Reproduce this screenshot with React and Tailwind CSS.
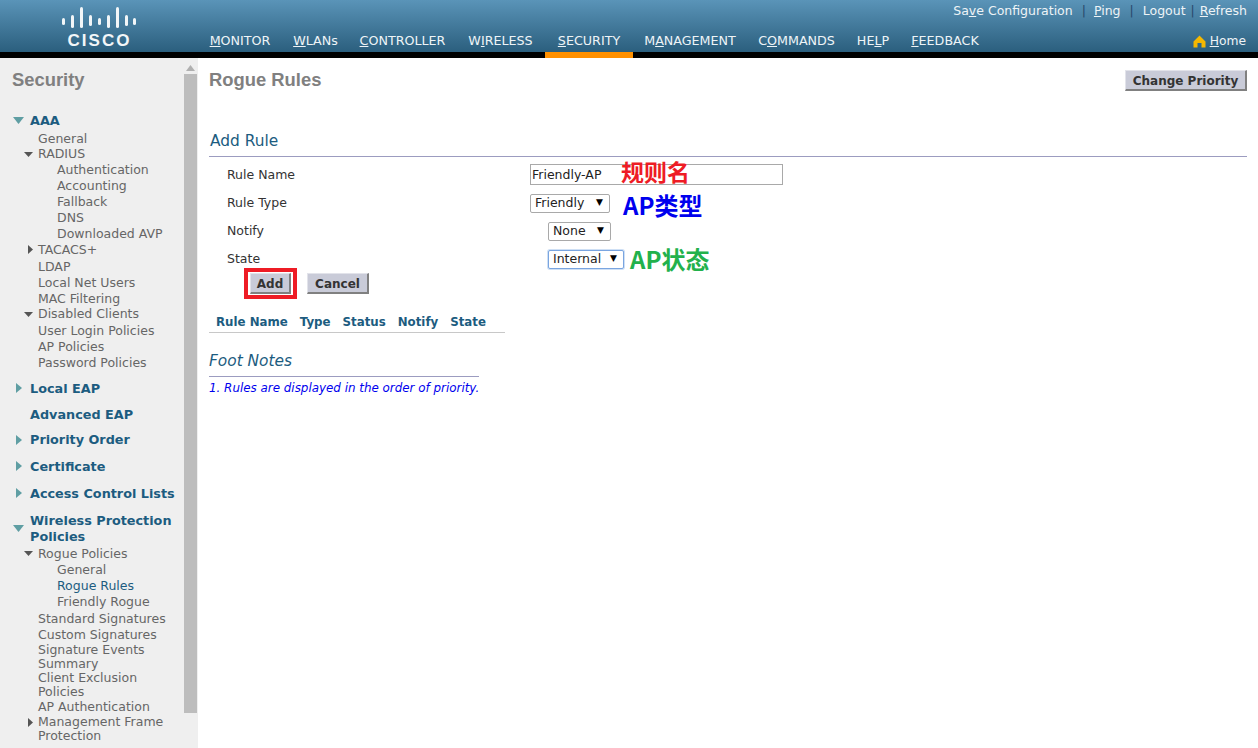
// before, underlined letter, after, column width
const navItems = [
  ['', 'M', 'ONITOR', 'w-[84px]'],
  ['', 'W', 'LANs', 'w-[67px]'],
  ['', 'C', 'ONTROLLER', 'w-[107px]'],
  ['W', 'I', 'RELESS', 'w-[89px]'],
  ['', 'S', 'ECURITY', 'w-[88px]'],
  ['M', 'A', 'NAGEMENT', 'w-[114px]'],
  ['C', 'O', 'MMANDS', 'w-[99px]'],
  ['HE', 'L', 'P', 'w-[54px]'],
  ['', 'F', 'EEDBACK', 'w-[90px]'],
]

// h = row height, so the odd spacing of the original tree stays in the flow
const tree = [
  { t: 'AAA', h: 'h-[20px]', head: true, arrow: 'down' },
  { t: 'General', h: 'h-[16px]', lvl: 1 },
  { t: 'RADIUS', h: 'h-[15px]', lvl: 1, arrow: 'smalldown' },
  { t: 'Authentication', h: 'h-[16px]', lvl: 2 },
  { t: 'Accounting', h: 'h-[16px]', lvl: 2 },
  { t: 'Fallback', h: 'h-[16px]', lvl: 2 },
  { t: 'DNS', h: 'h-[16px]', lvl: 2 },
  { t: 'Downloaded AVP', h: 'h-[16px]', lvl: 2 },
  { t: 'TACACS+', h: 'h-[17px]', lvl: 1, arrow: 'smallright' },
  { t: 'LDAP', h: 'h-[16px]', lvl: 1 },
  { t: 'Local Net Users', h: 'h-[16px]', lvl: 1 },
  { t: 'MAC Filtering', h: 'h-[16px]', lvl: 1 },
  { t: 'Disabled Clients', h: 'h-[15px]', lvl: 1, arrow: 'smalldown', pad: 'mb-[1px]' },
  { t: 'User Login Policies', h: 'h-[16px]', lvl: 1 },
  { t: 'AP Policies', h: 'h-[16px]', lvl: 1 },
  { t: 'Password Policies', h: 'h-[16px]', lvl: 1 },
  { t: 'Local EAP', h: 'h-[27px]', head: true, arrow: 'right', pad: 'mt-[4px]' },
  { t: 'Advanced EAP', h: 'h-[25px]', head: true },
  { t: 'Priority Order', h: 'h-[26px]', head: true, arrow: 'right' },
  { t: 'Certificate', h: 'h-[27px]', head: true, arrow: 'right' },
  { t: 'Access Control Lists', h: 'h-[27px]', head: true, arrow: 'right' },
  { t: 'Wireless Protection', h: 'h-[16px]', head: true, arrow: 'between', pad: 'mt-[6px]' },
  { t: 'Policies', h: 'h-[16px]', head: true, pad: 'mb-[1px]' },
  { t: 'Rogue Policies', h: 'h-[16px]', lvl: 1, arrow: 'smalldown' },
  { t: 'General', h: 'h-[16px]', lvl: 2 },
  { t: 'Rogue Rules', h: 'h-[16px]', lvl: 2, active: true },
  { t: 'Friendly Rogue', h: 'h-[17px]', lvl: 2 },
  { t: 'Standard Signatures', h: 'h-[16px]', lvl: 1 },
  { t: 'Custom Signatures', h: 'h-[16px]', lvl: 1 },
  { t: 'Signature Events', h: 'h-[14px]', lvl: 1 },
  { t: 'Summary', h: 'h-[14px]', lvl: 1 },
  { t: 'Client Exclusion', h: 'h-[14px]', lvl: 1 },
  { t: 'Policies', h: 'h-[14px]', lvl: 1 },
  { t: 'AP Authentication', h: 'h-[16px]', lvl: 1 },
  { t: 'Management Frame', h: 'h-[14px]', lvl: 1, arrow: 'smallright' },
  { t: 'Protection', h: 'h-[15px]', lvl: 1 },
]

const logoBars = [
  [0, 18, 7], [9, 15, 13], [18, 7, 21], [27, 15, 11], [36, 18, 7],
  [45, 15, 13], [54, 7, 21], [63, 15, 11], [71, 18, 7],
]

const Logo = () => (
  <div className="w-[198px] shrink-0 flex flex-col items-center pt-[7px]">
    <svg width="74" height="22" viewBox="0 7 74 22" className="text-[#f2f6f8]">
      {logoBars.map(([x, y, h]) => (
        <rect key={x} x={x} y={y} width="3" height={h} rx="1.5" fill="currentColor" />
      ))}
    </svg>
    <div className='font-["Liberation_Sans",sans-serif] font-bold text-[17px] leading-[18px] tracking-[2px] text-[#f2f6f8] mt-[3px] ml-[1px]'>CISCO</div>
  </div>
)

const Arrow = ({ kind }) => {
  if (!kind) return null
  if (kind === 'down')
    return <svg width="11" height="7" viewBox="0 0 11 7" className="absolute left-[13px] top-[6px]"><path d="M0 0H11L5.5 7Z" fill="#5f9ea3" /></svg>
  if (kind === 'between')
    return <svg width="11" height="7" viewBox="0 0 11 7" className="absolute left-[13px] top-[12px]"><path d="M0 0H11L5.5 7Z" fill="#5f9ea3" /></svg>
  if (kind === 'right')
    return <svg width="6" height="10" viewBox="0 0 6 10" className="absolute left-[16px] top-[8px]"><path d="M0 0L6 5L0 10Z" fill="#5f9ea3" /></svg>
  if (kind === 'smalldown')
    return <svg width="9" height="5" viewBox="0 0 9 5" className="absolute left-[24px] top-[5px]"><path d="M0 0H9L4.5 5Z" fill="#555" /></svg>
  return <svg width="5" height="9" viewBox="0 0 5 9" className="absolute left-[28px] top-[3px]"><path d="M0 0L5 4.5L0 9Z" fill="#555" /></svg>
}

const Row = ({ item }) => {
  const indent = item.head ? 'pl-[30px]' : item.lvl === 1 ? 'pl-[38px]' : 'pl-[57px]'
  const tone = item.head
    ? 'font-bold text-[#1c5c80] text-[12.8px]'
    : item.active ? 'text-[#1c5c80] text-[12.5px]' : 'text-[#666] text-[12.5px]'
  return (
    <div className={`relative flex items-center whitespace-nowrap ${item.h} ${indent} ${tone} ${item.pad || ''}`}>
      <Arrow kind={item.arrow} />
      {item.t}
    </div>
  )
}

const Select = ({ label, w, focus }) => (
  <div className={`flex items-center justify-between rounded-[2px] border h-[19px] pl-[4px] pr-[6px] text-[12.5px] text-[#222] bg-white ${w} ${focus ? 'border-[#7aa5e0] ring-1 ring-[#cfe0f5]' : 'border-[#a9a9a9]'}`}>
    <span>{label}</span>
    <span className="text-[9px] text-black">▼</span>
  </div>
)

const Btn = ({ children, w }) => (
  <button className={`h-[21px] pt-[1px] ${w} bg-[#c9cbd8] border border-t-[#e2e3ea] border-l-[#e2e3ea] border-r-[#808080] border-b-[#808080] border-b-2 border-r-2 text-[12px] font-bold text-[#333]`}>
    {children}
  </button>
)

const FormRow = ({ label, children }) => (
  <div className="flex items-center h-[28px]">
    <div className="w-[321px] pl-[18px] text-[12.5px] text-[#333]">{label}</div>
    {children}
  </div>
)

export default function App() {
  return (
    <div className='w-[1258px] h-[748px] overflow-hidden bg-white font-["DejaVu_Sans",sans-serif]'>
      {/* Header */}
      <header className="h-[52px] bg-gradient-to-b from-[#5a94b8] to-[#2b5f7e] flex">
        <Logo />
        <div className="flex-1 flex flex-col">
          <div className="flex justify-end items-center h-[22px] pr-[11px] text-[12.5px] text-[#eef4f7] whitespace-nowrap">
            <span>Sa<u>v</u>e Configuration</span>
            <span className="ml-[9px] mr-[8px] text-[#26476b]">|</span>
            <span><u>P</u>ing</span>
            <span className="mx-[9px] text-[#26476b]">|</span>
            <span>Lo<u>g</u>out</span>
            <span className="mx-[5px] text-[#26476b]">|</span>
            <span><u>R</u>efresh</span>
          </div>
          <div className="flex items-center h-[20px] mt-[9px] text-[12.7px] text-[#eef4f7] whitespace-nowrap">
            <nav className="flex">
              {navItems.map(([before, letter, after, w]) => (
                <div key={before + letter + after} className={`${w} flex justify-center`}>
                  <span>{before}<u>{letter}</u>{after}</span>
                </div>
              ))}
            </nav>
            <div className="ml-auto pr-[12px] flex items-center gap-[4px] text-[12.3px]">
              <svg width="13" height="13" viewBox="0 0 13 13"><path d="M6.5 0.5L12.5 6.5V12.5H8.5V8H4.5V12.5H0.5V6.5Z" fill="#f5b800" /></svg>
              <span><u>H</u>ome</span>
            </div>
          </div>
        </div>
      </header>
      <div className="h-[6px] bg-black flex">
        <div className="ml-[545px] w-[88px] bg-[#ff9000]" />
      </div>

      <div className="flex h-[690px]">
        {/* Sidebar */}
        <aside className="w-[198px] flex bg-[#efefef] shrink-0">
          <div className="w-[184px] overflow-hidden">
            <div className='font-["Liberation_Sans",sans-serif] font-bold text-[18.4px] leading-[22px] text-[#808080] pl-[12px] pt-[11px] mb-[20px]'>Security</div>
            {tree.map((item, i) => <Row key={i} item={item} />)}
          </div>
          <div className="w-[13px] flex flex-col items-center">
            <svg width="9" height="6" viewBox="0 0 9 6" className="mt-[7px] mb-[3px]"><path d="M4.5 0L9 6H0Z" fill="#b0b0b0" /></svg>
            <div className="w-[13px] h-[639px] bg-[#bdbdbd]" />
          </div>
        </aside>

        {/* Content */}
        <main className="flex-1 pl-[11px] pr-[11px] text-[13px]">
          <div className="flex justify-between items-start pt-[11px]">
            <h1 className='font-["Liberation_Sans",sans-serif] font-bold text-[18.4px] leading-[22px] text-[#808080]'>Rogue Rules</h1>
            <div className="pt-[1px]"><Btn w="w-[122px]">Change Priority</Btn></div>
          </div>

          <h2 className="mt-[40px] pl-[1px] text-[15.4px] leading-[20px] text-[#1c5c80]">Add Rule</h2>
          <div className="mt-[5px] h-px bg-[#9c9cc0]" />

          <div className="mt-[4px]">
            <FormRow label="Rule Name">
              <div className="relative mb-[2px]">
                <input readOnly value="Friendly-AP" className="block w-[253px] h-[21px] border border-[#a9a9a9] pl-[1px] text-[12.5px] text-[#222] outline-none" />
                <span className='absolute left-[91px] top-[-7px] font-["Noto_Sans_CJK_SC",sans-serif] font-bold text-[23px] leading-[28px] text-[#ee1c25]'>规则名</span>
              </div>
            </FormRow>
            <FormRow label="Rule Type">
              <Select label="Friendly" w="w-[80px]" />
              <span className='ml-[13px] font-["Noto_Sans_CJK_SC",sans-serif] font-bold text-[24px] leading-[28px] text-[#0000ee] mt-[3px]'>AP类型</span>
            </FormRow>
            <FormRow label="Notify">
              <div className="ml-[18px]"><Select label="None" w="w-[63px]" /></div>
            </FormRow>
            <FormRow label="State">
              <div className="ml-[18px]"><Select label="Internal" w="w-[76px]" focus /></div>
              <span className='ml-[6px] font-["Noto_Sans_CJK_SC",sans-serif] font-bold text-[24px] leading-[28px] text-[#22b14c]'>AP状态</span>
            </FormRow>
          </div>

          <div className="flex items-center ml-[35px] h-[31px] -mt-[5px] gap-[10px]">
            <div className="border-[4px] border-[#ee1c25] h-[31px] w-[53px] flex items-center justify-center">
              <Btn w="w-[41px]">Add</Btn>
            </div>
            <Btn w="w-[62px]">Cancel</Btn>
          </div>

          <div className="mt-[7px] w-[296px] h-[27px] flex items-end border-b border-[#c8c8c8] pl-[7px] gap-[12px] font-bold text-[11.8px] text-[#1c5c80] whitespace-nowrap">
            <span>Rule Name</span><span>Type</span><span>Status</span><span>Notify</span><span>State</span>
          </div>

          <div className="mt-[18px] w-[270px]">
            <div className="text-[15.4px] italic leading-[20px] text-[#1c5c80]">Foot Notes</div>
            <div className="mt-[5px] h-px bg-[#9c9cc0]" />
            <div className="mt-[3px] text-[11.9px] italic leading-[16px] text-[#0000ee] whitespace-nowrap">1. Rules are displayed in the order of priority.</div>
          </div>
        </main>
      </div>
    </div>
  )
}
